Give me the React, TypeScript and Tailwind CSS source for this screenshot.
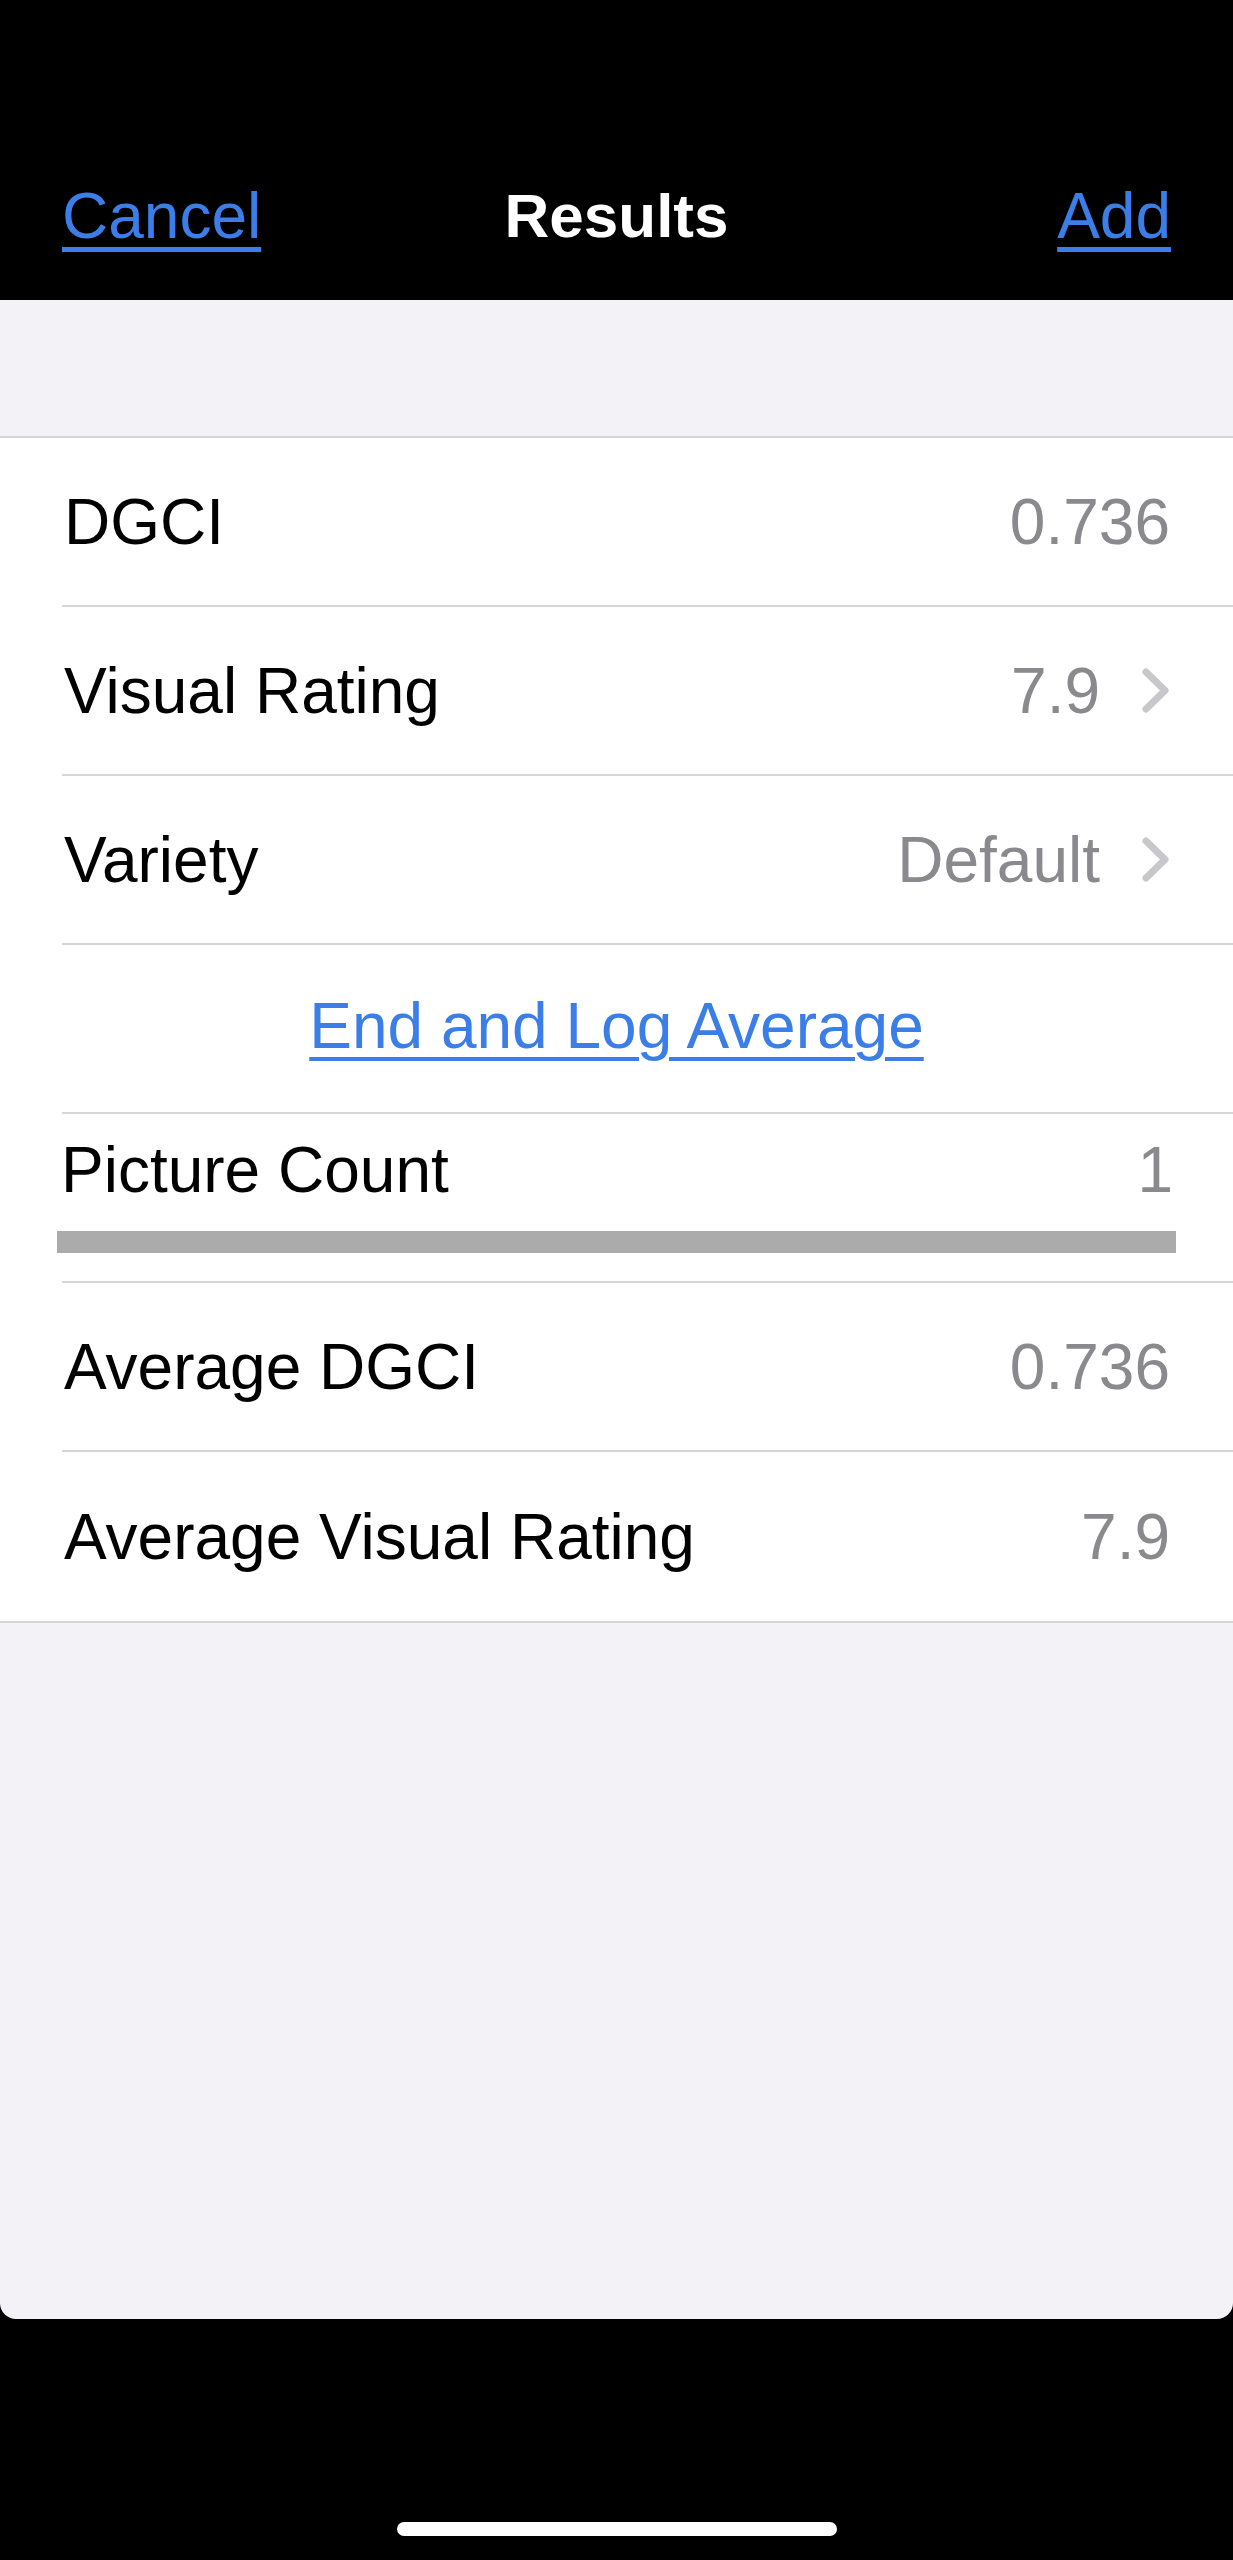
const font = { fontFamily: '"Liberation Sans", Arial, sans-serif' };

function Chevron() {
  return (
    <svg width="29" height="47" viewBox="0 0 29 47" fill="none" className="shrink-0">
      <path d="M5 5 L24 23.5 L5 42" stroke="#c7c7cc" strokeWidth="7" strokeLinecap="round" strokeLinejoin="round" />
    </svg>
  );
}

function Row({
  label,
  value,
  chevron,
  last,
}: {
  label: string;
  value: string;
  chevron?: boolean;
  last?: boolean;
}) {
  return (
    <div className="pl-[62px]">
      <div
        className={`flex h-[169px] items-center justify-between pr-[63px] ${last ? "" : "border-b-2 border-[#d6d6da]"}`}
      >
        <span className="pl-[2px] text-[64px] leading-none text-black">{label}</span>
        <div className="flex items-center gap-[41px]">
          <span className="text-[64px] leading-none text-[#8a8a8e]">{value}</span>
          {chevron && <Chevron />}
        </div>
      </div>
    </div>
  );
}

export default function App() {
  return (
    <div className="flex h-[2560px] w-full flex-col bg-black" style={font}>
      <header className="grid h-[300px] shrink-0 grid-cols-[1fr_auto_1fr] items-center px-[62px] pt-[132px]">
        <span className="justify-self-start text-[64px] leading-none text-[#3b7ee8] underline decoration-[5px] underline-offset-[9px]">
          Cancel
        </span>
        <span className="text-[62px] font-semibold leading-none text-white">Results</span>
        <span className="justify-self-end text-[64px] leading-none text-[#3b7ee8] underline decoration-[5px] underline-offset-[9px]">
          Add
        </span>
      </header>

      <main className="h-[2019px] shrink-0 rounded-b-[16px] bg-[#f2f2f7] pt-[136px]">
        <section className="border-y-2 border-[#d6d6da] bg-white">
          <Row label="DGCI" value="0.736" />
          <Row label="Visual Rating" value="7.9" chevron />
          <Row label="Variety" value="Default" chevron />
          <div className="pl-[62px]">
            <div className="flex h-[169px] items-center justify-center border-b-2 border-[#d6d6da] pb-[6px] pr-[62px]">
              <span className="text-[64px] leading-none text-[#3b7ee8] underline decoration-[4px] underline-offset-[9px]">
                End and Log Average
              </span>
            </div>
          </div>
          <div className="pl-[57px]">
            <div className="flex h-[169px] flex-col pr-[57px] pt-[20px]">
              <div className="flex items-center justify-between pl-[4px] pr-[3px]">
                <span className="text-[64px] leading-[1.15] text-black">Picture Count</span>
                <span className="text-[64px] leading-[1.15] text-[#8a8a8e]">1</span>
              </div>
              <div className="mt-[23px] h-[22px] w-full bg-[#ababab]" />
            </div>
          </div>
          <div className="-mt-[2px] pl-[62px]">
            <div className="border-b-2 border-[#d6d6da]" />
          </div>
          <Row label="Average DGCI" value="0.736" />
          <Row label="Average Visual Rating" value="7.9" last />
        </section>
      </main>

      <footer className="flex flex-1 items-end justify-center pb-[24px]">
        <div className="h-[14px] w-[440px] rounded-full bg-white" />
      </footer>
    </div>
  );
}
